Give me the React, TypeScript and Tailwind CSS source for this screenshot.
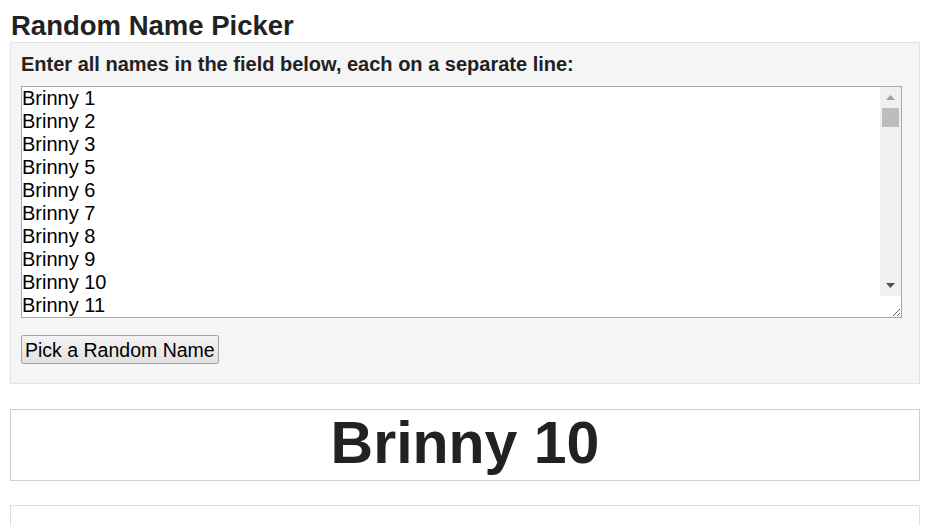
// Brinny 1..105, number 4 missing as in the original list
const names = Array.from({ length: 105 }, (_, i) => i + 1)
  .filter((n) => n !== 4)
  .map((n) => `Brinny ${n}`);

const Arrow = ({ up, color }: { up?: boolean; color: string }) => (
  <svg width="9" height="5" viewBox="0 0 9 5">
    <polygon points={up ? '4.5,0 9,5 0,5' : '0,0 9,0 4.5,5'} fill={color} />
  </svg>
);

export default function App() {
  return (
    <div className="min-h-[526px] bg-white px-[10px] pt-[10px] text-[#222] font-['Liberation_Sans',Arial,sans-serif] overflow-hidden">
      <h1 className="text-[27.5px] font-bold leading-[32px] pl-[1px]">Random Name Picker</h1>

      {/* Panel with input */}
      <div className="w-[910px] bg-[#f5f5f5] border border-[#e3e3e3] px-[10px] pt-[10px] pb-[19px]">
        <p className="text-[20px] font-bold leading-[23px]">
          Enter all names in the field below, each on a separate line:
        </p>
        <div className="relative mt-[10px] w-[881px]">
          <textarea
            className="block w-[881px] h-[232px] bg-white border border-[#a9a9a9] px-0 py-0 pr-[21px] text-[20px] leading-[23px] text-black outline-none resize-y overflow-y-scroll font-['Liberation_Sans',Arial,sans-serif]"
            defaultValue={names.join('\n')}
          />
          {/* scrollbar drawn over the textarea */}
          <div className="pointer-events-none absolute top-[1px] right-[1px] bottom-[22px] w-[21px] bg-[#f0f0f0] flex flex-col">
            <div className="h-[21px] flex items-center justify-center">
              <Arrow up color="#a3a3a3" />
            </div>
            <div className="flex-1 px-[2px]">
              <div className="h-[19px] bg-[#bdbdbd]"></div>
            </div>
            <div className="h-[21px] flex items-center justify-center">
              <Arrow color="#505050" />
            </div>
          </div>
        </div>
        <button className="mt-[17px] h-[29px] px-[3px] border border-[#a3a3a3] rounded-[2px] bg-gradient-to-b from-[#f3f3f3] to-[#e1e1e1] text-[19.5px] leading-[20px] text-black font-['Liberation_Sans',Arial,sans-serif]">
          Pick a Random Name
        </button>
      </div>

      {/* Result */}
      <div className="w-[910px] mt-[25px] h-[72px] border border-[#cfcfcf] flex items-center justify-center pb-[3px]">
        <span className="text-[59px] font-bold leading-none text-[#222]">Brinny 10</span>
      </div>

      <div className="w-[910px] mt-[24px] h-[60px] border border-[#dedede]"></div>
    </div>
  );
}
